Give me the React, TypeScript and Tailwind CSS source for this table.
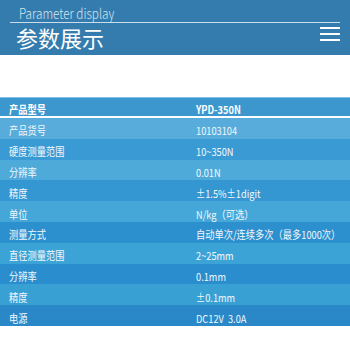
import type { ReactNode } from "react";

const FONT = { fontFamily: '"Noto Sans CJK SC", "Noto Sans", sans-serif' };

const ROWS: { label: string; value: string; bg: string }[] = [
  { label: "产品货号", value: "10103104", bg: "bg-[#58acdb]" },
  { label: "硬度测量范围", value: "10~350N", bg: "bg-[#3a9bd4]" },
  { label: "分辨率", value: "0.01N", bg: "bg-[#4eaad9]" },
  { label: "精度", value: "±1.5%±1digit", bg: "bg-[#3497d2]" },
  { label: "单位", value: "N/kg（可选）", bg: "bg-[#45a7d8]" },
  { label: "测量方式", value: "自动单次/连续多次（最多1000次）", bg: "bg-[#2c90cf]" },
  { label: "直径测量范围", value: "2~25mm", bg: "bg-[#3ca3d6]" },
  { label: "分辨率", value: "0.1mm", bg: "bg-[#2a8dcd]" },
  { label: "精度", value: "±0.1mm", bg: "bg-[#39a0d4]" },
  { label: "电源", value: "DC12V  3.0A", bg: "bg-[#2a88c8]" },
];

/** Condensed text: the source artwork squeezes glyphs horizontally. */
function Narrow({ children, bold }: { children: ReactNode; bold?: boolean }) {
  return (
    <span
      className={`inline-block origin-left scale-x-[0.84] whitespace-pre text-[11px] leading-none ${
        bold ? "font-bold" : "font-normal"
      }`}
    >
      {children}
    </span>
  );
}

function Row({ label, value, bg, bold }: { label: string; value: string; bg: string; bold?: boolean }) {
  return (
    <div className={`flex h-[20.8px] items-center text-[#f2f8fc] ${bg}`}>
      <div className="w-[196px] shrink-0 pl-[9px]">
        <Narrow bold={bold}>{label}</Narrow>
      </div>
      <div className="min-w-0 flex-1">
        <Narrow bold={bold}>{value}</Narrow>
      </div>
    </div>
  );
}

export default function App() {
  return (
    <div className="h-[350px] w-[350px] overflow-hidden bg-white" style={FONT}>
      <header className="flex h-[55px] flex-col bg-[#347cad] px-[10px]">
        <div className="h-[23px] border-b border-[#c9dded] pl-[9px] pt-0">
          <span className="inline-block origin-left scale-x-[0.84] text-[14px] font-light leading-[18px] text-[#d6e6f1]">
            Parameter display
          </span>
        </div>
        <div className="flex flex-1 items-start justify-between pl-[6px] pt-[3px]">
          <span className="text-[22px] leading-none text-white">参数展示</span>
          <div className="mt-[1px] flex w-[20px] flex-col gap-[4px]">
            <span className="h-[2px] bg-white" />
            <span className="h-[2px] bg-white" />
            <span className="h-[2px] bg-white" />
          </div>
        </div>
      </header>

      <div className="mt-[42px]">
        <div className="flex h-[19px] items-center border-t border-[#7fc1e6] bg-[#3d97cf] text-white">
          <div className="w-[196px] shrink-0 pl-[9px]">
            <Narrow bold>产品型号</Narrow>
          </div>
          <div className="flex-1">
            <Narrow bold>YPD-350N</Narrow>
          </div>
        </div>
        <div className="h-[2px] bg-white" />
        {ROWS.map((r, i) => (
          <Row key={i} {...r} />
        ))}
      </div>
    </div>
  );
}
